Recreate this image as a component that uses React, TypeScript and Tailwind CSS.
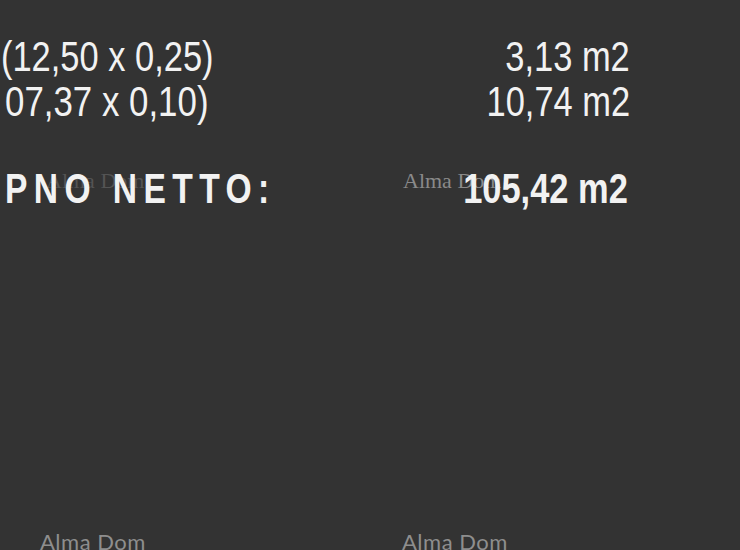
import React from "react";

const sans = { fontFamily: '"Liberation Sans", Arial, sans-serif' };

export default function App() {
  return (
    <div className="relative w-[740px] h-[550px] overflow-hidden bg-[#333333]">
      <div className="flex flex-col pt-[34px] pr-[110px] text-[#f2f2f2]" style={sans}>
        <div className="flex justify-between text-[42px] leading-[45px]">
          <span className="ml-[1px] inline-block origin-left scale-x-[0.82] whitespace-pre">(12,50 x 0,25)</span>
          <span className="inline-block origin-right scale-x-[0.82] whitespace-pre">3,13 m2</span>
        </div>
        <div className="flex justify-between text-[42px] leading-[45px]">
          <span className="ml-[5px] inline-block origin-left scale-x-[0.83] whitespace-pre">07,37 x 0,10)</span>
          <span className="inline-block origin-right scale-x-[0.82] whitespace-pre">10,74 m2</span>
        </div>
        <div className="relative z-10 mt-[42px] flex justify-between text-[42px] leading-[45px] font-bold">
          <span className="ml-[5px] inline-block origin-left scale-x-[0.8] tracking-[8px] whitespace-pre">PNO NETTO:</span>
          <span className="mr-[2px] inline-block origin-right scale-x-[0.82] whitespace-pre">105,42 m2</span>
        </div>
      </div>
      <span className="absolute left-[46px] top-[164px] text-[22px] text-[#6a6a6a] opacity-60" style={{ fontFamily: '"Liberation Serif", serif' }}>Alma Dom</span>
      <span className="absolute left-[403px] top-[164px] text-[22px] text-[#8a8a8a]" style={{ fontFamily: '"Liberation Serif", serif' }}>Alma Dom</span>
      <span className="absolute left-[40px] top-[525px] text-[22px] tracking-[0.5px] text-[#8e8e8e]" style={{ fontFamily: 'Lato, "Open Sans", sans-serif' }}>Alma Dom</span>
      <span className="absolute left-[402px] top-[525px] text-[22px] tracking-[0.5px] text-[#8e8e8e]" style={{ fontFamily: 'Lato, "Open Sans", sans-serif' }}>Alma Dom</span>
    </div>
  );
}
